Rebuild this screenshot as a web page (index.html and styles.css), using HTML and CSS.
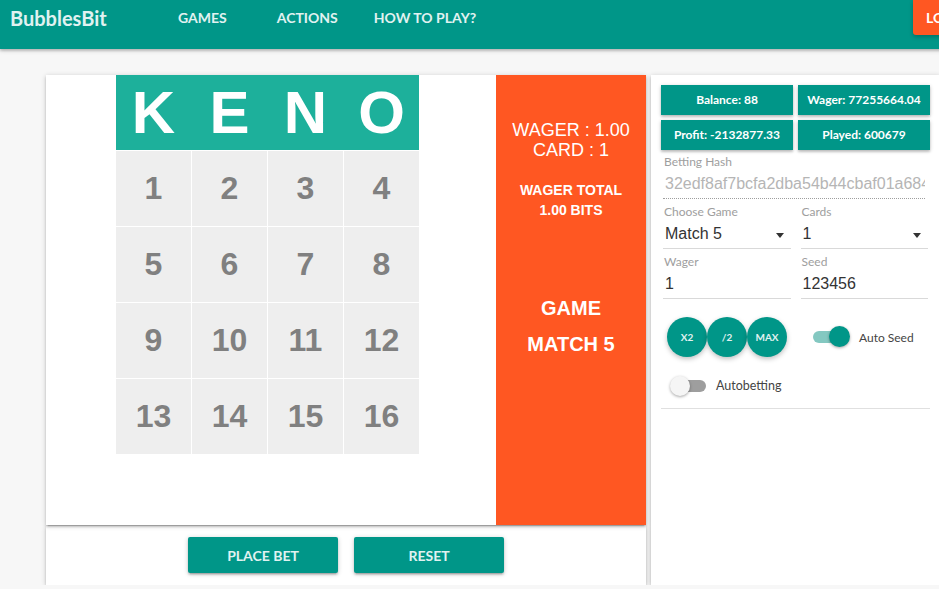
FILE: index.html
```html
<!DOCTYPE html>
<html lang="en">
<head>
    <meta charset="UTF-8">
    <meta name="viewport" content="width=device-width, initial-scale=1.0">
    <title>BubblesBit - Keno</title>
    <link rel="stylesheet" href="styles.css">
</head>
<body>
    <header class="navbar">
        <a class="brand" href="#">BubblesBit</a>
        <nav class="nav-links">
            <a class="nav-link dropdown" href="#">GAMES</a>
            <a class="nav-link" href="#">ACTIONS</a>
            <a class="nav-link" href="#">HOW TO PLAY?</a>
        </nav>
        <a class="login-btn" href="#">LOGIN</a>
    </header>

    <main class="page">
        <div class="game">
            <section class="game-card">
                <div class="board">
                    <div class="keno-head">
                        <span>K</span><span>E</span><span>N</span><span>O</span>
                    </div>
                    <div class="keno-grid">
                        <div class="cell">1</div>
                        <div class="cell">2</div>
                        <div class="cell">3</div>
                        <div class="cell">4</div>
                        <div class="cell">5</div>
                        <div class="cell">6</div>
                        <div class="cell">7</div>
                        <div class="cell">8</div>
                        <div class="cell">9</div>
                        <div class="cell">10</div>
                        <div class="cell">11</div>
                        <div class="cell">12</div>
                        <div class="cell">13</div>
                        <div class="cell">14</div>
                        <div class="cell">15</div>
                        <div class="cell">16</div>
                    </div>
                </div>
                <div class="ticket">
                    <p class="ticket-wager">WAGER : 1.00<br>CARD : 1</p>
                    <p class="ticket-total">WAGER TOTAL<br>1.00 BITS</p>
                    <p class="ticket-game">GAME<br>MATCH 5</p>
                </div>
            </section>
            <section class="game-actions">
                <button class="btn">PLACE BET</button>
                <button class="btn">RESET</button>
            </section>
        </div>

        <aside class="side-card">
            <div class="stats">
                <div class="stat">Balance: 88</div>
                <div class="stat">Wager: 77255664.04</div>
                <div class="stat">Profit: -2132877.33</div>
                <div class="stat">Played: 600679</div>
            </div>

            <div class="form">
                <div class="field">
                    <label>Betting Hash</label>
                    <div class="value hash">32edf8af7bcfa2dba54b44cbaf01a684</div>
                </div>
                <div class="field-row">
                    <div class="field">
                        <label>Choose Game</label>
                        <div class="value select">Match 5<span class="caret"></span></div>
                    </div>
                    <div class="field">
                        <label>Cards</label>
                        <div class="value select">1<span class="caret"></span></div>
                    </div>
                </div>
                <div class="field-row">
                    <div class="field">
                        <label>Wager</label>
                        <div class="value">1</div>
                    </div>
                    <div class="field">
                        <label>Seed</label>
                        <div class="value">123456</div>
                    </div>
                </div>
            </div>

            <div class="controls">
                <div class="round-btns">
                    <button class="round">X2</button>
                    <button class="round">/2</button>
                    <button class="round">MAX</button>
                </div>
                <div class="switch">
                    <span class="lever on"></span>
                    <span class="switch-label">Auto Seed</span>
                </div>
            </div>
            <div class="switch autobet">
                <span class="lever"></span>
                <span class="switch-label">Autobetting</span>
            </div>
            <hr class="divider">
        </aside>
    </main>
</body>
</html>
```

FILE: styles.css
```css
* {
    box-sizing: border-box;
}
body {
    margin: 0;
    background: #f7f7f7;
    font-family: Lato, "Open Sans", sans-serif;
    overflow: hidden;
}

/* navbar */
.navbar {
    display: flex;
    align-items: flex-start;
    width: 1000px;
    height: 49px;
    background: #009688;
    box-shadow: 0 2px 2px 0 rgba(0,0,0,.14), 0 1px 5px 0 rgba(0,0,0,.2);
    position: relative;
    z-index: 2;
}
.brand {
    width: 160px;
    padding-left: 10px;
    font-size: 20px;
    font-weight: 700;
    line-height: 36px;
    color: #e0f2f1;
    text-decoration: none;
}
.nav-links {
    display: flex;
}
.nav-link {
    padding: 0 18px;
    font-size: 14px;
    font-weight: 700;
    line-height: 36px;
    color: #e0f2f1;
    text-decoration: none;
}
.nav-link.dropdown {
    padding-right: 32px;
}
.login-btn {
    margin-left: auto;
    margin-right: 7px;
    width: 80px;
    height: 35px;
    padding-left: 13px;
    background: #ff5722;
    border-radius: 0 0 3px 3px;
    box-shadow: 0 2px 4px rgba(0,0,0,.25);
    color: #fff;
    font-size: 14px;
    font-weight: 700;
    line-height: 35px;
    text-decoration: none;
}

/* layout */
.page {
    display: flex;
    align-items: flex-start;
    gap: 5px;
    width: 1000px;
    padding: 26px 0 0 46px;
}
.game {
    width: 600px;
}
.game-card {
    display: flex;
    height: 450px;
    background: #fff;
    box-shadow: 0 2px 2px 0 rgba(0,0,0,.14), 0 3px 1px -2px rgba(0,0,0,.12), 0 1px 5px 0 rgba(0,0,0,.2);
    position: relative;
    z-index: 1;
}
.board {
    width: 450px;
    padding-left: 70px;
    font-family: "Liberation Sans", Arial, sans-serif;
    font-weight: bold;
}
.keno-head, .keno-grid {
    display: grid;
    grid-template-columns: repeat(4, 75px);
    column-gap: 1px;
    width: 303px;
}
.keno-head {
    background: #1db09b;
    color: #fff;
    font-size: 60px;
    line-height: 75px;
    text-align: center;
}
.keno-grid {
    row-gap: 1px;
    margin-top: 1px;
}
.cell {
    height: 75px;
    background: #eeeeee;
    color: #808080;
    font-size: 32px;
    line-height: 75px;
    text-align: center;
}

.ticket {
    width: 150px;
    padding-top: 45px;
    background: #ff5722;
    color: #fff;
    text-align: center;
    font-family: "Liberation Sans", Arial, sans-serif;
}
.ticket p {
    margin: 0;
}
.ticket-wager {
    font-size: 18px;
    line-height: 20px;
}
.ticket-total {
    margin-top: 20px !important;
    font-size: 14px;
    font-weight: bold;
    line-height: 20px;
}
.ticket-game {
    margin-top: 70px !important;
    font-size: 20px;
    font-weight: bold;
    line-height: 36px;
}

.game-actions {
    display: flex;
    justify-content: center;
    gap: 16px;
    margin-top: 1px;
    padding: 11px 0 12px;
    background: #fff;
    box-shadow: 0 2px 2px 0 rgba(0,0,0,.14), 0 3px 1px -2px rgba(0,0,0,.12), 0 1px 5px 0 rgba(0,0,0,.2);
}
.btn {
    width: 150px;
    height: 36px;
    border: none;
    border-radius: 2px;
    background: #009688;
    color: #e0f2f1;
    font-family: Lato, "Open Sans", sans-serif;
    font-size: 14px;
    font-weight: 700;
    box-shadow: 0 2px 2px 0 rgba(0,0,0,.14), 0 3px 1px -2px rgba(0,0,0,.12), 0 1px 5px 0 rgba(0,0,0,.2);
}

/* side panel */
.side-card {
    width: 289px;
    height: 510px;
    padding: 10px;
    background: #fff;
    box-shadow: 0 2px 2px 0 rgba(0,0,0,.14), 0 3px 1px -2px rgba(0,0,0,.12), 0 1px 5px 0 rgba(0,0,0,.2);
}
.stats {
    display: grid;
    grid-template-columns: 132px 132px;
    gap: 5px;
}
.stat {
    height: 30px;
    background: #009688;
    color: #fff;
    font-size: 12px;
    font-weight: 700;
    line-height: 30px;
    text-align: center;
    box-shadow: 0 2px 2px 0 rgba(0,0,0,.14), 0 1px 4px 0 rgba(0,0,0,.2);
}
.form {
    padding: 5px 2px 0;
}
.field-row {
    display: grid;
    grid-template-columns: 1fr 1fr;
    gap: 10px;
    margin-top: 6px;
}
.field label {
    display: block;
    padding-left: 1px;
    font-size: 12px;
    line-height: 14px;
    color: #9e9e9e;
}
.field .value {
    position: relative;
    height: 30px;
    padding-left: 2px;
    border-bottom: 1px solid #d9d9d9;
    font-family: "Liberation Sans", Arial, sans-serif;
    font-size: 16px;
    line-height: 30px;
    color: #333;
}
.field .hash {
    width: 262px;
    color: #b5b5b5;
    border-bottom: 1px dotted #9e9e9e;
    white-space: nowrap;
    overflow: hidden;
}
.caret {
    position: absolute;
    right: 7px;
    top: 14px;
    border-left: 4px solid transparent;
    border-right: 4px solid transparent;
    border-top: 5px solid #333;
}

.controls {
    display: flex;
    align-items: center;
    margin-top: 18px;
    padding-left: 6px;
}
.round-btns {
    display: flex;
}
.round {
    width: 40px;
    height: 40px;
    padding: 0;
    border: none;
    border-radius: 50%;
    background: #009688;
    color: #e0f2f1;
    font-family: Lato, "Open Sans", sans-serif;
    font-size: 10px;
    font-weight: 700;
    box-shadow: 0 2px 5px rgba(0,0,0,.25);
}
.switch {
    display: flex;
    align-items: center;
}
.controls .switch {
    margin-left: 26px;
}
.lever {
    position: relative;
    width: 34px;
    height: 12px;
    border-radius: 6px;
    background: #9e9e9e;
}
.lever::after {
    content: "";
    position: absolute;
    top: -4px;
    left: -2px;
    width: 20px;
    height: 20px;
    border-radius: 50%;
    background: #f5f5f5;
    box-shadow: 0 1px 3px rgba(0,0,0,.35);
}
.lever.on {
    background: #84c8c1;
}
.lever.on::after {
    left: auto;
    right: -3px;
    top: -5px;
    width: 21px;
    height: 21px;
    background: #009688;
}
.switch-label {
    margin-left: 12px;
    font-size: 12px;
    color: #444;
}
.autobet {
    margin-top: 21px;
    padding-left: 11px;
}
.autobet .switch-label {
    margin-left: 10px;
    font-size: 12.5px;
}
.divider {
    margin: 15px 0 0;
    border: none;
    border-top: 1px solid #e0e0e0;
}
```
